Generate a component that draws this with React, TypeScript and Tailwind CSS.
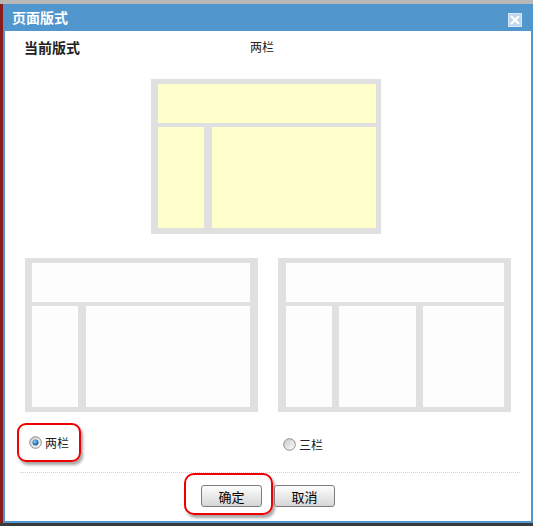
import React from "react";

const font = { fontFamily: '"Noto Sans CJK SC", "Noto Sans", sans-serif' };

function Radio({ checked }: { checked: boolean }) {
  return (
    <svg width="13" height="13" viewBox="0 0 13 13" className="shrink-0">
      <defs>
        <linearGradient id={checked ? "rg1" : "rg2"} x1="0" y1="0" x2="1" y2="1">
          <stop offset="0" stopColor="#c8c8c8" />
          <stop offset="1" stopColor="#ffffff" />
        </linearGradient>
        <radialGradient id="dot" cx="0.4" cy="0.35" r="0.7">
          <stop offset="0" stopColor="#8fd0f5" />
          <stop offset="0.6" stopColor="#2a7fc0" />
          <stop offset="1" stopColor="#1a4f86" />
        </radialGradient>
      </defs>
      <circle cx="6.5" cy="6.5" r="5.8" fill={`url(#${checked ? "rg1" : "rg2"})`} stroke="#8c8c8c" strokeWidth="1" />
      {checked && <circle cx="6.5" cy="6.5" r="3" fill="url(#dot)" />}
    </svg>
  );
}

function Btn({ label }: { label: string }) {
  return (
    <div className="w-[61px] h-[22px] rounded-[3px] border border-[#7d7d7d] bg-gradient-to-b from-[#fefefe] to-[#d6d6d6] flex items-center justify-center text-[13px] text-black leading-none">
      {label}
    </div>
  );
}

function Cell({ className }: { className: string }) {
  return <div className={className} />;
}

export default function App() {
  return (
    <div className="w-[533px] h-[526px] bg-[#a8a8a8] flex flex-col overflow-hidden" style={font}>
      <div className="h-[4px] bg-[#b8b8b8] shrink-0" />
      <div className="flex flex-row h-[519px] shrink-0">
        <div className="w-[3px] bg-[#8a1c1c] shrink-0" />
        <div className="w-[530px] flex flex-col border-l-2 border-r-2 border-b-2 border-[#5196cd] bg-white">
          {/* title bar */}
          <div className="h-[27px] bg-[#5196cd] flex flex-row justify-between shrink-0">
            <div className="pl-[7px] pt-[4px] text-[14px] font-bold text-white leading-[18px]">页面版式</div>
            <div className="mr-[9px] mt-[9px] w-[14px] h-[14px] bg-[#bfd7ee] border border-[#d9e8f5] flex items-center justify-center">
              <svg width="12" height="12" viewBox="0 0 12 12">
                <path d="M2 2 L10 10 M10 2 L2 10" stroke="#ffffff" strokeWidth="2" />
              </svg>
            </div>
          </div>
          {/* header row */}
          <div className="flex flex-row pt-[6px] h-[26px] pl-[19px] items-center">
            <div className="w-[226px] text-[14px] font-bold text-[#222] leading-[20px]">当前版式</div>
            <div className="text-[12px] text-[#222] leading-[20px]">两栏</div>
          </div>
          {/* current preview */}
          <div className="mt-[22px] ml-[146px] w-[230px] h-[155px] bg-[#e0e0e0] pt-[5px] pl-[7px] pr-[5px] flex flex-col gap-[4px]">
            <Cell className="h-[39px] bg-[#ffffcc]" />
            <div className="flex flex-row gap-[8px] h-[101px]">
              <Cell className="w-[46px] bg-[#ffffcc]" />
              <Cell className="flex-1 bg-[#ffffcc]" />
            </div>
          </div>
          {/* options */}
          <div className="mt-[24px] pl-[20px] flex flex-row gap-[20px]">
            <div className="w-[233px] h-[154px] bg-[#e0e0e0] pt-[5px] pl-[7px] pr-[8px] flex flex-col gap-[4px]">
              <Cell className="h-[39px] bg-[#fdfdfd]" />
              <div className="flex flex-row gap-[8px] h-[101px]">
                <Cell className="w-[46px] bg-[#fdfdfd]" />
                <Cell className="flex-1 bg-[#fdfdfd]" />
              </div>
            </div>
            <div className="w-[233px] h-[154px] bg-[#e0e0e0] pt-[5px] pl-[8px] pr-[7px] flex flex-col gap-[4px]">
              <Cell className="h-[39px] bg-[#fdfdfd]" />
              <div className="flex flex-row gap-[7px] h-[101px]">
                <Cell className="w-[46px] bg-[#fdfdfd]" />
                <Cell className="w-[77px] bg-[#fdfdfd]" />
                <Cell className="flex-1 bg-[#fdfdfd]" />
              </div>
            </div>
          </div>
          {/* radios */}
          <div className="mt-[11px] pl-[12px] flex flex-row items-center">
            <div className="h-[39px] w-[64px] border-2 border-[#ee0000] rounded-[9px] shadow-[2px_3px_3px_rgba(0,0,0,0.35)] flex flex-row items-center pl-[10px] gap-[3px]">
              <Radio checked />
              <span className="text-[12px] text-[#222] leading-none">两栏</span>
            </div>
            <div className="ml-[202px] flex flex-row items-center gap-[3px] mt-[4px]">
              <Radio checked={false} />
              <span className="text-[12px] text-[#222] leading-none">三栏</span>
            </div>
          </div>
          {/* dotted line */}
          <div className="mt-[10px] ml-[15px] mr-[11px] border-t border-dotted border-[#d4d4d4]" />
          {/* buttons */}
          <div className="flex flex-row ml-[179px]">
            <div className="h-[42px] w-[89px] border-2 border-[#ee0000] rounded-[10px] shadow-[2px_3px_3px_rgba(0,0,0,0.35)] pt-[10px] pl-[15px]">
              <Btn label="确定" />
            </div>
            <div className="ml-[1px] mt-[12px]">
              <Btn label="取消" />
            </div>
          </div>
        </div>
      </div>
      <div className="h-[3px] bg-[#3a3a3a] shrink-0" />
    </div>
  );
}
